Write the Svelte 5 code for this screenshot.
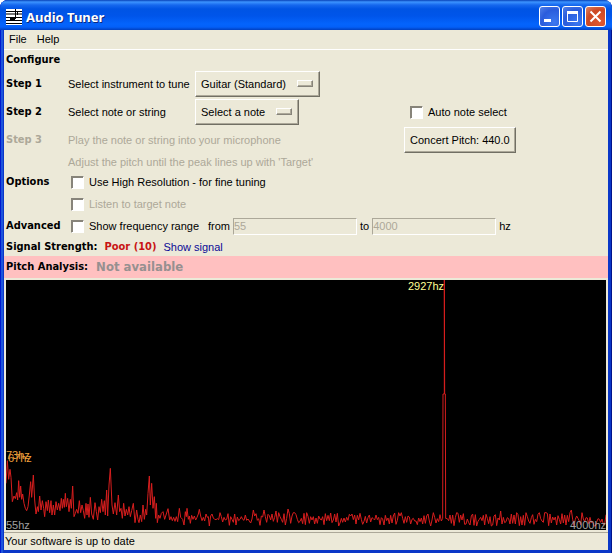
<script lang="ts">
  let instrument = $state("Guitar (Standard)");
  let note = $state("Select a note");
  let autoNote = $state(false);
  let highRes = $state(false);
  let listen = $state(false);
  let showRange = $state(false);
  let fromHz = $state("55");
  let toHz = $state("4000");

  // x, y pairs of the low end of the spectrum, three units to a pixel
  const lowEnd = [
    18, 130, 22, 62, 26, 118, 30, 88, 33, 112, 37, 185, 42, 168, 46, 176, 50, 158, 53, 180,
    56, 122, 59, 172, 62, 138, 65, 178, 68, 162, 72, 190, 76, 205, 80, 212, 84, 200, 88, 165,
    92, 125, 95, 172, 100, 105, 104, 180, 108, 222, 112, 200, 115, 215, 119, 168, 123, 210,
    127, 182, 131, 205, 134, 230, 138, 185, 142, 212, 145, 180, 149, 218, 153, 182, 156, 225,
    160, 195, 164, 225, 168, 185, 172, 210, 176, 190, 180, 212, 184, 175, 187, 205, 190, 178,
    193, 202, 196, 160, 199, 200, 203, 175, 207, 215, 211, 178, 214, 205, 218, 138, 222, 230,
    226, 220, 230, 208, 234, 220, 238, 182, 242, 218, 246, 195, 250, 212, 254, 235, 258, 190,
    261, 225, 264, 192, 267, 232, 271, 172, 275, 222, 280, 238, 285, 188, 289, 215, 293, 240,
    297, 200, 301, 218, 305, 178, 309, 215, 313, 182, 316, 225, 320, 150, 323, 228, 327, 135,
    331, 85, 336, 195, 340, 222, 345, 188, 350, 225, 355, 165, 359, 215, 363, 205, 367, 235,
    371, 190, 375, 228, 379, 208, 383, 225, 387, 200, 391, 230, 395, 212, 400, 190, 405, 248,
    410, 210, 414, 238, 417, 248, 421, 225, 425, 245, 429, 195, 433, 238, 437, 208, 440, 225,
    444, 160, 448, 108, 451, 195, 455, 130, 459, 205, 463, 170, 467, 235, 469, 190, 472, 248,
    476, 225, 480, 235, 484, 220, 489, 215, 494, 238, 498, 225, 504, 206, 509, 240, 513, 230,
    517, 242, 521, 232, 525, 244, 529, 230, 533, 245, 538, 205, 542, 232, 548, 238, 552, 255,
    556, 215, 559, 230, 561, 205, 565, 238, 568, 228, 571, 250, 575, 226, 579, 238, 583, 228,
    587, 240, 591, 232, 595, 222, 598, 208, 602, 228, 606, 242, 610, 232, 614, 243, 618, 222,
    622, 232, 625, 230, 628, 258, 632, 228, 636, 222,
  ];

  const spikes: Record<number, number> = {
    760: 210, 792: 210, 828: 213, 864: 207, 880: 218, 1502: 213, 1714: 210,
  };

  function noise(from: number, to: number) {
    const out: string[] = [];
    let seed = from;
    let up = true;
    for (let x = from; x < to; x += 4) {
      seed = (seed * 1103 + 12345) % 65536;
      const r = (seed >> 4) % 21;
      out.push(`${x},${spikes[x] ?? (up ? 238 - r : 238 + r)}`);
      if (r % 5 !== 0) up = !up;
    }
    return out;
  }

  const start: string[] = [];
  for (let i = 0; i < lowEnd.length; i += 2) start.push(`${lowEnd[i]},${lowEnd[i + 1]}`);

  const peak = "1328,235 1329,-138 1333,-138 1333,-480 1334,-138 1336,-138 1337,235";
  const spectrum = [...start, ...noise(640, 1326), peak, ...noise(1342, 1820)].join(" ");
</script>

<div class="window">
  <header class="titlebar">
    <svg class="app-icon" viewBox="0 0 16 16" shape-rendering="crispEdges">
      <rect width="16" height="16" fill="#fff" />
      <path d="M0 2.5h16M0 8.5h16M0 11.5h16M0 14.5h16" stroke="#000" />
      <path d="M0 5h16" stroke="#777" stroke-width="2" />
      <path d="M9.5 0v10M10 2.5h1M11 3.5h1M11.5 4v2" stroke="#000" />
      <path d="M5 8h4v3h-1v1h-4v-3h1z" fill="#000" />
    </svg>
    <h1>Audio Tuner</h1>
    <div class="window-buttons">
      <button class="win-btn" aria-label="Minimize">
        <svg viewBox="0 0 21 21"><path d="M5 14.5h7" stroke="#fff" stroke-width="3" /></svg>
      </button>
      <button class="win-btn" aria-label="Maximize">
        <svg viewBox="0 0 21 21">
          <path d="M5.5 6v9.5h10V6" fill="none" stroke="#fff" />
          <path d="M5 6.5h11" stroke="#fff" stroke-width="3" />
        </svg>
      </button>
      <button class="win-btn close" aria-label="Close">
        <svg viewBox="0 0 21 21"><path d="M5.5 5.5l10 10M15.5 5.5l-10 10" stroke="#fff" stroke-width="2" /></svg>
      </button>
    </div>
  </header>

  <div class="client">
    <nav class="menubar">
      <button>File</button>
      <button>Help</button>
    </nav>

    <main>
      <h2 class="row heading">Configure</h2>

      <div class="row tall">
        <strong>Step 1</strong>
        <label class="caption" for="instrument">Select instrument to tune</label>
        <div class="option-menu wide">
          <select id="instrument" bind:value={instrument}>
            <option>Guitar (Standard)</option>
            <option>Bass</option>
          </select>
          <span class="indicator"></span>
        </div>
      </div>

      <div class="row tall">
        <strong>Step 2</strong>
        <label class="caption" for="note">Select note or string</label>
        <div class="middle">
          <div class="option-menu">
            <select id="note" bind:value={note}>
              <option>Select a note</option>
              <option>E</option>
              <option>A</option>
            </select>
            <span class="indicator"></span>
          </div>
        </div>
        <label class="check auto"><input type="checkbox" bind:checked={autoNote} />Auto note select</label>
      </div>

      <div class="row step3">
        <strong class="disabled">Step 3</strong>
        <span class="instruction disabled">Play the note or string into your microphone</span>
        <button class="push">Concert Pitch: 440.0</button>
      </div>

      <div class="row hint">
        <strong></strong>
        <span class="disabled">Adjust the pitch until the peak lines up with 'Target'</span>
      </div>

      <div class="row">
        <strong>Options</strong>
        <label class="check"><input type="checkbox" bind:checked={highRes} />Use High Resolution - for fine tuning</label>
      </div>

      <div class="row">
        <strong></strong>
        <label class="check disabled"><input type="checkbox" bind:checked={listen} disabled />Listen to target note</label>
      </div>

      <div class="row">
        <strong>Advanced</strong>
        <label class="check range"><input type="checkbox" bind:checked={showRange} />Show frequency range</label>
        <div class="hz">
          <label for="from">from</label>
          <input id="from" type="text" bind:value={fromHz} disabled={!showRange} />
          <label for="to">to</label>
          <input id="to" type="text" bind:value={toHz} disabled={!showRange} />
          <span>hz</span>
        </div>
      </div>

      <div class="row signal">
        <b>Signal Strength:</b>
        <b class="poor">Poor (10)</b>
        <a href="#signal">Show signal</a>
      </div>

      <div class="row analysis">
        <b>Pitch Analysis:</b>
        <b class="result">Not available</b>
      </div>

      <div class="chart">
        <svg viewBox="18 -480 1800 750" preserveAspectRatio="none">
          <polyline points={spectrum} vector-effect="non-scaling-stroke" />
        </svg>
        <span class="freq peak">2927hz</span>
        <span class="freq low-a">73hz</span>
        <span class="freq low-b">67hz</span>
        <span class="freq min">55hz</span>
        <span class="freq max">4000hz</span>
      </div>
    </main>

    <footer>Your software is up to date</footer>
  </div>
</div>

<style>
  :global(body) {
    margin: 0;
    background: #fff;
  }
  .window {
    min-height: 100vh;
    box-sizing: border-box;
    display: flex;
    flex-direction: column;
    padding: 0 4px 4px;
    background: #0a37c8;
    border-radius: 8px 8px 0 0;
    box-shadow: inset 1px 0 #0019cf, inset -1px -1px #00138c, inset 3px 0 #1c54dc;
    color: #000;
    font-family: Tahoma, "Liberation Sans", sans-serif;
    font-size: 11px;
    line-height: 14px;
  }
  button,
  input,
  select {
    font: inherit;
    color: inherit;
  }
  .titlebar {
    display: flex;
    align-items: center;
    gap: 4px;
    height: 30px;
    box-sizing: border-box;
    margin: 0 -4px;
    padding: 3px 6px 0;
    border-radius: 8px 8px 0 0;
    background: linear-gradient(#0842b8 0, #3c94ff 2px, #1668ee 5px, #0054e4 9px, #0055ea 16px, #0464fc 24px, #0460f8 27px, #0140c0 30px);
  }
  .app-icon {
    width: 16px;
    height: 16px;
  }
  h1 {
    flex: 1;
    margin: 0;
    color: #fff;
    font-family: "Trebuchet MS", "Noto Sans", sans-serif;
    font-size: 13px;
    font-weight: 700;
    line-height: 16px;
    text-shadow: 1px 1px #0a2a80;
  }
  .window-buttons {
    display: flex;
    gap: 2px;
  }
  .win-btn {
    width: 21px;
    height: 21px;
    box-sizing: border-box;
    padding: 0;
    border: 1px solid #fff;
    border-radius: 3px;
    background: radial-gradient(circle at 75% 80%, #3c78f0, #2a5cdc 60%, #5482e8);
  }
  .win-btn svg {
    display: block;
    width: 21px;
    height: 21px;
    margin: -1px;
  }
  .win-btn.close {
    background: radial-gradient(circle at 75% 80%, #e05830, #cc4824 60%, #e08868);
  }
  .client {
    flex: 1;
    display: flex;
    flex-direction: column;
    background: #ece9d8;
  }
  .menubar {
    display: flex;
    height: 20px;
    box-sizing: border-box;
    padding: 0 0 1px 5px;
    gap: 10px;
    border-bottom: 1px solid #fff;
  }
  .menubar button {
    padding: 0;
    border: none;
    background: none;
  }
  main {
    flex: 1;
    display: flex;
    flex-direction: column;
  }
  .row {
    display: flex;
    align-items: center;
    height: 22px;
    padding-left: 2px;
  }
  strong,
  b,
  .heading {
    font-family: Tahoma, "DejaVu Sans Condensed", sans-serif;
  }
  .row strong {
    flex: none;
    width: 62px;
  }
  .row.heading {
    height: 20px;
    margin: 0;
    font-size: 11px;
  }
  .row.tall {
    height: 28px;
  }
  .row.step3 {
    height: 27px;
  }
  .row.hint {
    height: 18px;
  }
  .caption {
    width: 127px;
    white-space: nowrap;
  }
  .middle {
    width: 208px;
  }
  .instruction {
    width: 336px;
  }
  .disabled {
    color: #aca899;
  }
  .option-menu {
    position: relative;
    width: 104px;
  }
  .option-menu.wide {
    width: 125px;
  }
  select,
  .push {
    appearance: none;
    display: block;
    height: 26px;
    box-sizing: border-box;
    border: 1px solid;
    border-color: #fff #716f64 #716f64 #fff;
    border-radius: 0;
    background: #ece9d8;
    box-shadow: inset -1px -1px #aca899;
  }
  select {
    width: 100%;
    padding: 0 5px;
  }
  .push {
    padding: 0 5px;
  }
  .indicator {
    position: absolute;
    right: 7px;
    top: 9px;
    width: 16px;
    height: 7px;
    box-sizing: border-box;
    border: 1px solid;
    border-color: #fff #87847a #87847a #fff;
    box-shadow: inset -1px -1px #aca899;
    pointer-events: none;
  }
  .check {
    display: flex;
    align-items: center;
    gap: 5px;
    margin-left: 3px;
    white-space: nowrap;
  }
  .check.auto {
    margin-left: 7px;
  }
  .check.range {
    width: 137px;
  }
  .check input {
    appearance: none;
    width: 13px;
    height: 13px;
    box-sizing: border-box;
    margin: 0;
    border: 1px solid;
    border-color: #87847a #fff #fff #87847a;
    background: #fff;
    box-shadow: inset 1px 1px #87847a;
  }
  .check input:checked {
    background: #333;
  }
  .hz {
    display: flex;
    align-items: center;
    gap: 3px;
  }
  .hz input {
    width: 124px;
    height: 17px;
    box-sizing: border-box;
    padding: 0;
    border: 1px solid;
    border-color: #aca899 #fff #fff #aca899;
    background: #fff;
  }
  .hz input:disabled {
    background: #ece9d8;
    color: #aca899;
  }
  .row.signal {
    height: 19px;
    gap: 7px;
  }
  .poor {
    color: #c81414;
  }
  .signal a {
    color: #0a0a96;
    text-decoration: none;
  }
  .row.analysis {
    gap: 8px;
    background: #ffc0c0;
  }
  .result {
    color: #969090;
    font-size: 13px;
  }
  .chart {
    position: relative;
    flex: 1;
    min-height: 250px;
    margin: 2px;
    background: #000;
  }
  .chart svg {
    position: absolute;
    inset: 0;
    width: 100%;
    height: 100%;
  }
  polyline {
    fill: none;
    stroke: #d81e1e;
    stroke-width: 1px;
    stroke-linejoin: bevel;
  }
  .freq {
    position: absolute;
    color: #a0a0a0;
  }
  .freq.peak {
    top: -1px;
    right: 27%;
    color: #ffff96;
  }
  .freq.low-a,
  .freq.low-b {
    left: 0;
    bottom: 68px;
    color: #f0a03c;
  }
  .freq.low-b {
    left: 2px;
    bottom: 65px;
  }
  .freq.min {
    left: 0;
    bottom: -2px;
  }
  .freq.max {
    right: 0;
    bottom: -2px;
  }
  footer {
    height: 17px;
    padding-left: 1px;
    border-top: 1px solid #aca899;
    line-height: 17px;
  }
</style>
